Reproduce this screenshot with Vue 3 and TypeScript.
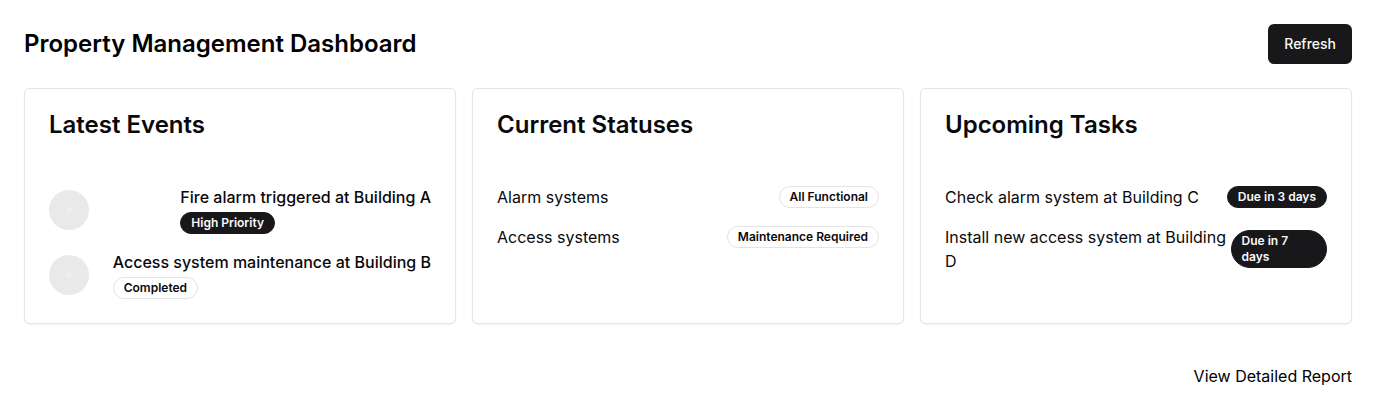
<script setup lang="ts">
type Variant = 'solid' | 'outline'

interface Item {
  text: string
  badge: string
  variant: Variant
}

interface Panel {
  title: string
  items: Item[]
}

const events: Item[] = [
  { text: 'Fire alarm triggered at Building A', badge: 'High Priority', variant: 'solid' },
  { text: 'Access system maintenance at Building B', badge: 'Completed', variant: 'outline' },
]

const panels: Panel[] = [
  {
    title: 'Current Statuses',
    items: [
      { text: 'Alarm systems', badge: 'All Functional', variant: 'outline' },
      { text: 'Access systems', badge: 'Maintenance Required', variant: 'outline' },
    ],
  },
  {
    title: 'Upcoming Tasks',
    items: [
      { text: 'Check alarm system at Building C', badge: 'Due in 3 days', variant: 'solid' },
      { text: 'Install new access system at Building D', badge: 'Due in 7 days', variant: 'solid' },
    ],
  },
]
</script>

<template>
  <main class="dashboard">
    <header class="topbar">
      <h1>Property Management Dashboard</h1>
      <button type="button" class="refresh">Refresh</button>
    </header>

    <div class="cards">
      <section class="card">
        <h2>Latest Events</h2>
        <ul class="list">
          <li v-for="event in events" :key="event.text" class="row">
            <span class="avatar" aria-hidden="true"></span>
            <div class="event">
              <p class="event-title">{{ event.text }}</p>
              <span class="badge" :class="event.variant">{{ event.badge }}</span>
            </div>
          </li>
        </ul>
      </section>

      <section v-for="panel in panels" :key="panel.title" class="card">
        <h2>{{ panel.title }}</h2>
        <ul class="list">
          <li v-for="item in panel.items" :key="item.text" class="row">
            <p>{{ item.text }}</p>
            <span class="badge" :class="item.variant">{{ item.badge }}</span>
          </li>
        </ul>
      </section>
    </div>

    <footer class="footer">
      <a href="#report">View Detailed Report</a>
    </footer>
  </main>
</template>

<style>
body {
  margin: 0;
  background: #ffffff;
}
</style>

<style scoped>
.dashboard {
  box-sizing: border-box;
  padding: 24px;
  font-family: Inter, "Liberation Sans", sans-serif;
  font-size: 16px;
  line-height: 24px;
  color: #09090b;
}

h1,
h2,
p,
ul {
  margin: 0;
  padding: 0;
}

.topbar {
  display: flex;
  align-items: center;
  justify-content: space-between;
  margin-bottom: 24px;
}

h1 {
  font-size: 24px;
  line-height: 32px;
  font-weight: 600;
  color: #000000;
}

.refresh {
  height: 40px;
  padding: 0 16px;
  border: 0;
  border-radius: 6px;
  background: #18181b;
  color: #fafafa;
  font-family: inherit;
  font-size: 14px;
  line-height: 20px;
  font-weight: 500;
  cursor: pointer;
}

.cards {
  display: grid;
  grid-template-columns: repeat(3, minmax(0, 1fr));
  gap: 16px;
}

.card {
  padding: 24px;
  border: 1px solid #e4e4e7;
  border-radius: 6px;
  background: #ffffff;
  box-shadow: 0 1px 2px rgba(0, 0, 0, 0.05);
}

h2 {
  font-size: 24px;
  line-height: 24px;
  font-weight: 600;
}

.list {
  display: flex;
  flex-direction: column;
  gap: 16px;
  margin-top: 48px;
  list-style: none;
}

.row {
  display: flex;
  align-items: center;
  justify-content: space-between;
}

.avatar {
  flex: none;
  width: 40px;
  height: 40px;
  border-radius: 50%;
  background: radial-gradient(circle, #f2f2f2 0, #e9e9e9 4px);
}

.event {
  display: flex;
  flex-direction: column;
  align-items: flex-start;
  gap: 3px;
}

.event-title {
  font-weight: 500;
}

.badge {
  padding: 2px 10px;
  border: 1px solid transparent;
  border-radius: 9999px;
  font-size: 12px;
  line-height: 16px;
  font-weight: 600;
}

.solid {
  border-color: #18181b;
  background: #18181b;
  color: #fafafa;
}

.outline {
  border-color: #e4e4e7;
}

.footer {
  display: flex;
  justify-content: flex-end;
  margin-top: 40px;
}

.footer a {
  color: #000000;
  text-decoration: none;
}
</style>
